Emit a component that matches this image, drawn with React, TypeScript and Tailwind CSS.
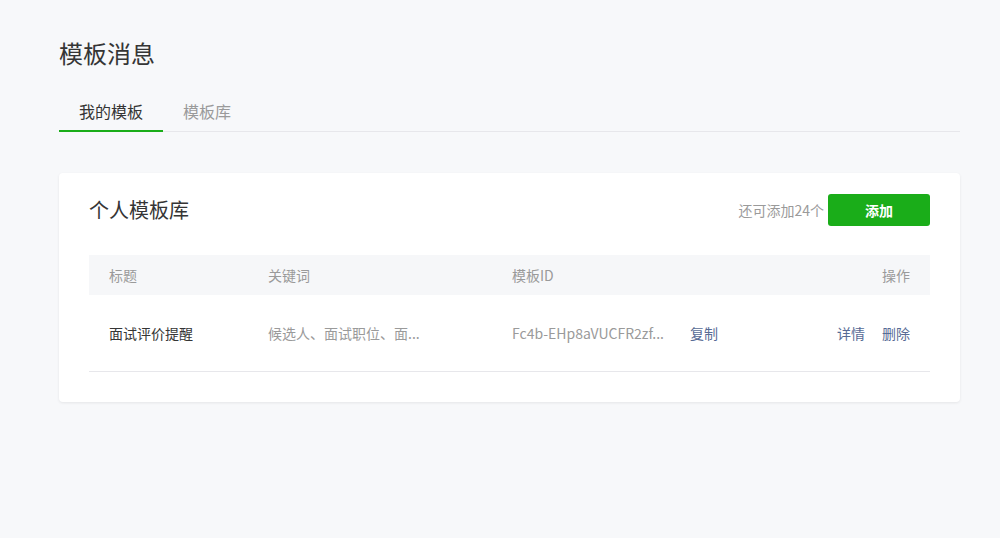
import React from "react";

export default function App() {
  return (
    <div
      className="min-h-[538px] w-full bg-[#f7f8fa] pl-[59px] pr-[40px] pt-[36px]"
      style={{ fontFamily: '"Noto Sans CJK SC", "Noto Sans", sans-serif' }}
    >
      <h1 className="text-[24px] leading-[34px] font-normal text-[#353535]">模板消息</h1>
      <div className="mt-[28px] flex border-b border-[#e7e7eb]">
        <div className="border-b-2 border-[#1aad19] px-[20px] pb-[6px] text-[16px] leading-[26px] text-[#353535] -mb-px">
          我的模板
        </div>
        <div className="px-[20px] pb-[6px] text-[16px] leading-[26px] text-[#9a9a9a]">模板库</div>
      </div>

      <div className="mt-[41px] rounded-[4px] bg-white px-[30px] pt-[21px] pb-[30px] shadow-[0_1px_3px_rgba(0,0,0,0.08)]">
        <div className="flex items-center justify-between">
          <h2 className="text-[20px] leading-[32px] font-normal text-[#353535]">个人模板库</h2>
          <div className="flex items-center gap-[4px]">
            <span className="text-[14px] text-[#9a9a9a]">还可添加24个</span>
            <button className="h-[32px] w-[102px] rounded-[3px] bg-[#1aad19] text-[14px] font-bold text-white">
              添加
            </button>
          </div>
        </div>

        <div className="mt-[29px]">
          <div className="flex h-[40px] items-center bg-[#f6f7f9] text-[14px] text-[#9a9a9a]">
            <div className="w-[159px] pl-[20px]">标题</div>
            <div className="w-[244px] pl-[20px]">关键词</div>
            <div className="flex-1 pl-[20px]">模板ID</div>
            <div className="pr-[20px]">操作</div>
          </div>
          <div className="flex h-[77px] items-center border-b border-[#e7e7eb] text-[14px]">
            <div className="w-[159px] pl-[20px] text-[#353535]">面试评价提醒</div>
            <div className="w-[244px] pl-[20px] text-[#9a9a9a]">候选人、面试职位、面...</div>
            <div className="flex flex-1 items-center pl-[20px]">
              <span className="w-[178px] text-[#9a9a9a]">Fc4b-EHp8aVUCFR2zf...</span>
              <span className="text-[#576b95]">复制</span>
            </div>
            <div className="flex gap-[17px] pr-[20px] text-[#576b95]">
              <span>详情</span>
              <span>删除</span>
            </div>
          </div>
        </div>
      </div>
    </div>
  );
}
